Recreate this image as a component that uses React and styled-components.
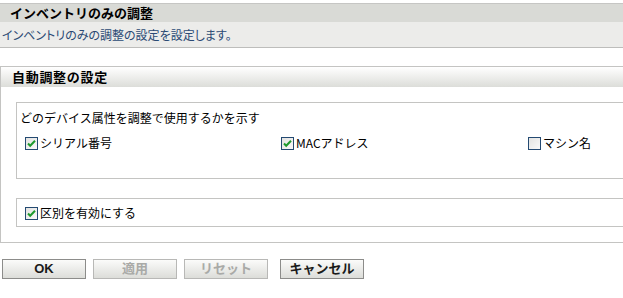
import React from "react";
import styled, { createGlobalStyle } from "styled-components";

const GlobalStyle = createGlobalStyle`
  html, body {
    margin: 0;
    padding: 0;
    background: #ffffff;
    overflow: hidden;
  }
  body {
    font-family: "Noto Sans CJK JP", "Liberation Sans", sans-serif;
    color: #000;
  }
`;

const Page = styled.div`
  width: 100%;
  overflow: hidden;
  padding-top: 3px;
`;

const TitleBar = styled.div`
  height: 18px;
  border-top: 1px solid #c6c6c4;
  background: #d9dad6;
  padding-left: 10px;
  font-size: 13px;
  font-weight: bold;
  line-height: 18px;
`;

const DescBar = styled.div`
  height: 25px;
  background: #ececea;
  border-bottom: 1px solid #bdbdbb;
  padding-left: 2px;
  font-size: 12px;
  font-feature-settings: "palt";
  line-height: 25px;
  color: #2b4a74;
`;

const Section = styled.div`
  margin-top: 18px;
  border: 1px solid #c4c4c2;
  border-right: none;
`;

const SectionHeader = styled.div`
  height: 20px;
  background: linear-gradient(#ffffff, #dcddd9);
  padding-left: 11px;
  font-size: 13px;
  font-weight: bold;
  letter-spacing: 0.7px;
  line-height: 20px;
`;

const SectionBody = styled.div`
  padding: 15px 0 15px 15px;
  display: flex;
  flex-direction: column;
  gap: 19px;
`;

const Box = styled.div`
  border: 1px solid #c4c4c2;
  border-right: none;
  height: ${(p) => p.$h}px;
  padding: ${(p) => p.$pad};
  box-sizing: border-box;
  font-size: 12px;
`;

const BoxLabel = styled.div`
  padding-left: 3px;
  line-height: 16px;
  margin-bottom: 9px;
`;

const Options = styled.div`
  display: grid;
  grid-template-columns: 256px 247px 1fr;
  padding-left: 8px;
`;

const Option = styled.label`
  display: flex;
  align-items: center;
  gap: 2px;
  font-size: 12px;
  line-height: 16px;
`;

const Buttons = styled.div`
  display: flex;
  gap: 7px;
  padding: 16px 0 0 2px;
`;

const Button = styled.button`
  width: 84px;
  height: 20px;
  margin-right: ${(p) => (p.$extra ? 5 : 0)}px;
  padding: 0;
  border: 1px solid ${(p) => (p.disabled ? "#b8b8b6" : "#8c8c8a")};
  background: linear-gradient(#fbfbfa, #dcddd9);
  color: ${(p) => (p.disabled ? "#a9aaa7" : "#1a1a1a")};
  font-family: "Liberation Sans", "Noto Sans CJK JP", sans-serif;
  font-size: 13px;
  font-weight: bold;
  line-height: 18px;
`;

const Check = ({ checked }) => (
  <svg width="13" height="13" viewBox="0 0 13 13">
    <defs>
      <linearGradient id="cbg" x1="0" y1="0" x2="1" y2="1">
        <stop offset="0" stopColor="#e2e2e0" />
        <stop offset="1" stopColor="#fafafa" />
      </linearGradient>
    </defs>
    <rect x="0.5" y="0.5" width="12" height="12" fill="url(#cbg)" stroke="#244a72" />
    {checked && (
      <path d="M3 6.5 L5.2 8.8 L10 3.8" fill="none" stroke="#1e9a2c" strokeWidth="2" />
    )}
  </svg>
);

export default function App() {
  return (
    <Page>
      <GlobalStyle />
      <TitleBar>インベントリのみの調整</TitleBar>
      <DescBar>インベントリのみの調整の設定を設定します。</DescBar>
      <Section>
        <SectionHeader>自動調整の設定</SectionHeader>
        <SectionBody>
          <Box $h={77} $pad="7px 0 0 0">
            <BoxLabel>どのデバイス属性を調整で使用するかを示す</BoxLabel>
            <Options>
              <Option>
                <Check checked />
                シリアル番号
              </Option>
              <Option>
                <Check checked />
                MACアドレス
              </Option>
              <Option>
                <Check />
                マシン名
              </Option>
            </Options>
          </Box>
          <Box $h={29} $pad="6px 0 0 8px">
            <Option>
              <Check checked />
              区別を有効にする
            </Option>
          </Box>
        </SectionBody>
      </Section>
      <Buttons>
        <Button>OK</Button>
        <Button disabled>適用</Button>
        <Button disabled $extra>リセット</Button>
        <Button>キャンセル</Button>
      </Buttons>
    </Page>
  );
}
